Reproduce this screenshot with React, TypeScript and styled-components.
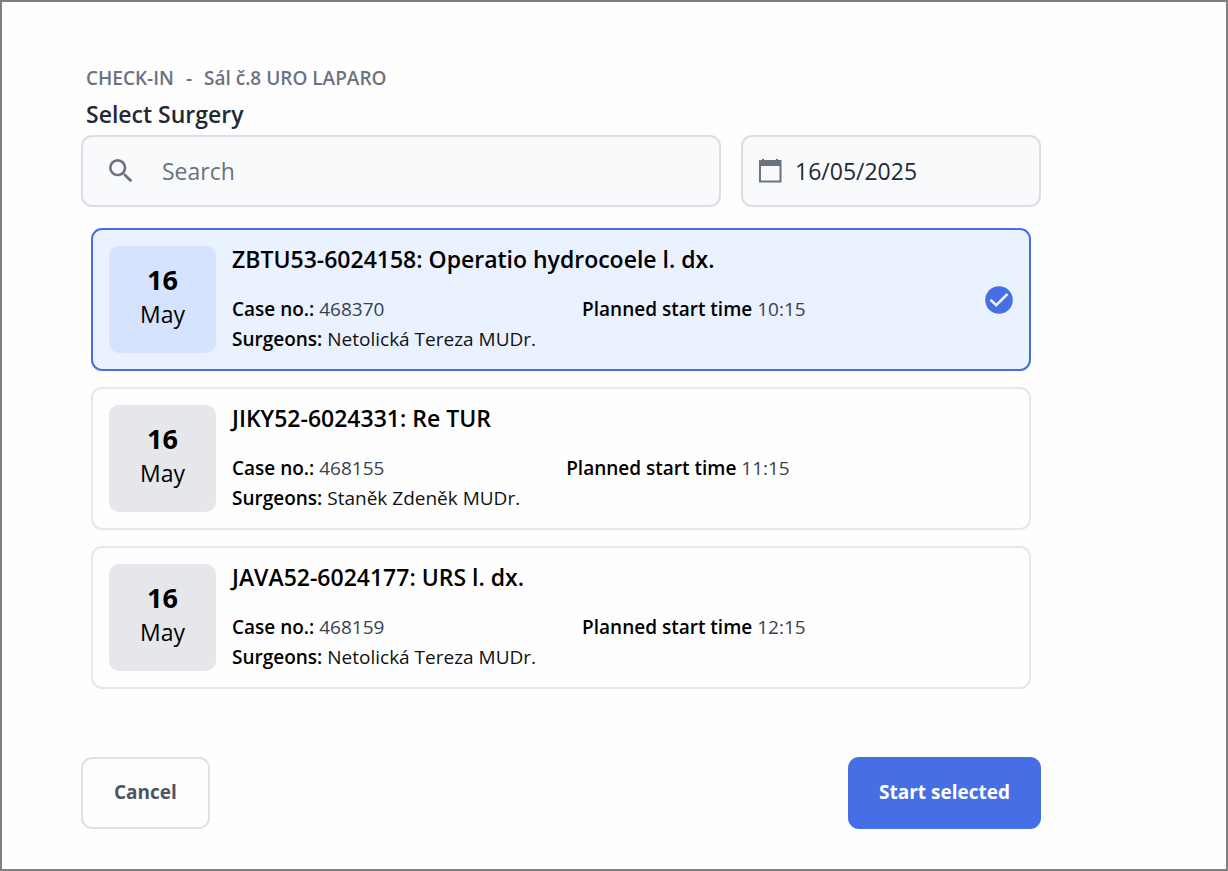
import { useState } from "react";
import styled, { createGlobalStyle } from "styled-components";

const GlobalStyle = createGlobalStyle`
  *, *::before, *::after { box-sizing: border-box; }
  body {
    margin: 0;
    background: #fefefe;
    color: #000;
    font-family: "Segoe UI", "Open Sans", "Noto Sans", sans-serif;
  }
  h1, h2, p { margin: 0; }
  button, input { font-family: inherit; }
`;

const Page = styled.main`
  min-height: 100vh;
  padding: 60px 185px 40px 79px;
  border: 2px solid #808080;
`;

const Header = styled.header`
  padding: 0 5px;
`;

const Context = styled.p`
  display: flex;
  gap: 12px;
  font-size: 19px;
  font-weight: 600;
  line-height: 32px;
  color: #6b7280;
`;

const Title = styled.h1`
  font-size: 23px;
  font-weight: 600;
  line-height: 41px;
  color: #1f2937;
`;

const Filters = styled.div`
  display: flex;
  gap: 20px;
`;

const Field = styled.label<{ $fixed?: boolean }>`
  display: flex;
  align-items: center;
  flex: ${(p) => (p.$fixed ? "0 0 300px" : "1 1 0")};
  gap: ${(p) => (p.$fixed ? "12px" : "25px")};
  min-width: 0;
  height: 72px;
  padding: 0 ${(p) => (p.$fixed ? "14px" : "22px")};
  border: 2px solid #dcdee3;
  border-radius: 11px;
  background: #f9fafc;
`;

const FieldIcon = styled.svg`
  flex: none;
  fill: #6b7280;
`;

const TextInput = styled.input`
  flex: 1;
  min-width: 0;
  padding: 0;
  border: 0;
  outline: 0;
  background: transparent;
  font-size: 23px;
  line-height: 32px;
  color: #1f2937;
  &::placeholder { color: #6b7280; opacity: 1; }
`;

const List = styled.div`
  display: flex;
  flex-direction: column;
  gap: 16px;
  padding: 21px 10px 0;
`;

const Card = styled.label<{ $selected: boolean }>`
  display: flex;
  align-items: flex-start;
  gap: 16px;
  padding: 16px 16px 15px;
  border: 2px solid ${(p) => (p.$selected ? "#466fe6" : "#e5e7eb")};
  border-radius: 11px;
  background: ${(p) => (p.$selected ? "#eaf1ff" : "#fefefe")};
  cursor: pointer;
`;

const HiddenRadio = styled.input`
  position: absolute;
  width: 1px;
  height: 1px;
  margin: 0;
  opacity: 0;
`;

const DateBadge = styled.div<{ $selected: boolean }>`
  display: flex;
  flex: none;
  flex-direction: column;
  align-items: center;
  justify-content: center;
  width: 107px;
  height: 107px;
  padding-bottom: 7px;
  border-radius: 10px;
  background: ${(p) => (p.$selected ? "#d6e3ff" : "#e5e7eb")};
`;

const Day = styled.strong`
  font-size: 27px;
  font-weight: 700;
  line-height: 36px;
`;

const Month = styled.span`
  font-size: 23px;
  line-height: 32px;
`;

const Content = styled.div`
  flex: 1;
  min-width: 0;
`;

const CardTitle = styled.h2`
  margin-bottom: 22px;
  font-size: 23px;
  font-weight: 600;
  line-height: 26px;
`;

const Details = styled.div`
  display: flex;
  gap: 46px;
`;

const Detail = styled.p<{ $muted?: boolean }>`
  font-size: 19px;
  line-height: 30px;
  color: ${(p) => (p.$muted ? "#374151" : "#111")};
  b { font-weight: 600; color: #000; }
`;

const Check = styled.svg`
  flex: none;
  align-self: center;
`;

const Actions = styled.footer`
  display: flex;
  justify-content: space-between;
  padding-top: 68px;
`;

const Button = styled.button<{ $primary?: boolean }>`
  height: 72px;
  padding: 0 ${(p) => (p.$primary ? "29px" : "31px")} 2px;
  border: 2px solid ${(p) => (p.$primary ? "#466fe6" : "#e0e1e6")};
  border-radius: 11px;
  background: ${(p) => (p.$primary ? "#466fe6" : "#fefefe")};
  color: ${(p) => (p.$primary ? "#fff" : "#4b5563")};
  font-size: 19px;
  font-weight: 700;
  line-height: 28px;
  cursor: pointer;
`;

const surgeries = [
  { code: "ZBTU53-6024158", name: "Operatio hydrocoele l. dx.", caseNo: "468370", surgeon: "Netolická Tereza MUDr.", time: "10:15" },
  { code: "JIKY52-6024331", name: "Re TUR", caseNo: "468155", surgeon: "Staněk Zdeněk MUDr.", time: "11:15" },
  { code: "JAVA52-6024177", name: "URS l. dx.", caseNo: "468159", surgeon: "Netolická Tereza MUDr.", time: "12:15" },
];

export default function App() {
  const [selected, setSelected] = useState(surgeries[0].code);
  const [date, setDate] = useState("16/05/2025");

  return (
    <>
      <GlobalStyle />
      <Page>
        <Header>
          <Context>
            <span>CHECK-IN</span>
            <span>-</span>
            <span>Sál č.8 URO LAPARO</span>
          </Context>
          <Title>Select Surgery</Title>
        </Header>
        <Filters>
          <Field>
            <FieldIcon width="32" height="32" viewBox="0 0 24 24" aria-hidden="true">
              <path d="M15.5 14h-.79l-.28-.27A6.47 6.47 0 0 0 16 9.5 6.5 6.5 0 1 0 9.5 16c1.61 0 3.09-.59 4.23-1.57l.27.28v.79l5 4.99L20.49 19l-4.99-5zm-6 0C7.01 14 5 11.99 5 9.5S7.01 5 9.5 5 14 7.01 14 9.5 11.99 14 9.5 14z" />
            </FieldIcon>
            <TextInput type="text" placeholder="Search" aria-label="Search" />
          </Field>
          <Field $fixed>
            <FieldIcon width="26" height="26" viewBox="0 0 26 26" aria-hidden="true">
              <path d="M5 1h2v1h12V1h2v1h3.500v22.500H2V2h3zM4 8v14.500h18.500V8z" />
            </FieldIcon>
            <TextInput type="text" aria-label="Date" value={date} onChange={(e) => setDate(e.target.value)} />
          </Field>
        </Filters>
        <List role="radiogroup" aria-label="Surgeries">
          {surgeries.map((s) => {
            const active = s.code === selected;
            return (
              <Card key={s.code} $selected={active}>
                <HiddenRadio type="radio" name="surgery" checked={active} onChange={() => setSelected(s.code)} />
                <DateBadge $selected={active}>
                  <Day>16</Day>
                  <Month>May</Month>
                </DateBadge>
                <Content>
                  <CardTitle>{s.code}: {s.name}</CardTitle>
                  <Details>
                    <div>
                      <Detail $muted><b>Case no.:</b> {s.caseNo}</Detail>
                      <Detail><b>Surgeons:</b> {s.surgeon}</Detail>
                    </div>
                    <Detail $muted><b>Planned start time</b> {s.time}</Detail>
                  </Details>
                </Content>
                {active && (
                  <Check width="28" height="28" viewBox="0 0 28 28" aria-hidden="true">
                    <circle cx="14" cy="14" r="13.800" fill="#466fe6" />
                    <path d="M5.500 13.800l5.700 5.400L22.500 8" fill="none" stroke="#eaf1ff" strokeWidth="2.600" />
                  </Check>
                )}
              </Card>
            );
          })}
        </List>
        <Actions>
          <Button type="button">Cancel</Button>
          <Button type="button" $primary>Start selected</Button>
        </Actions>
      </Page>
    </>
  );
}
